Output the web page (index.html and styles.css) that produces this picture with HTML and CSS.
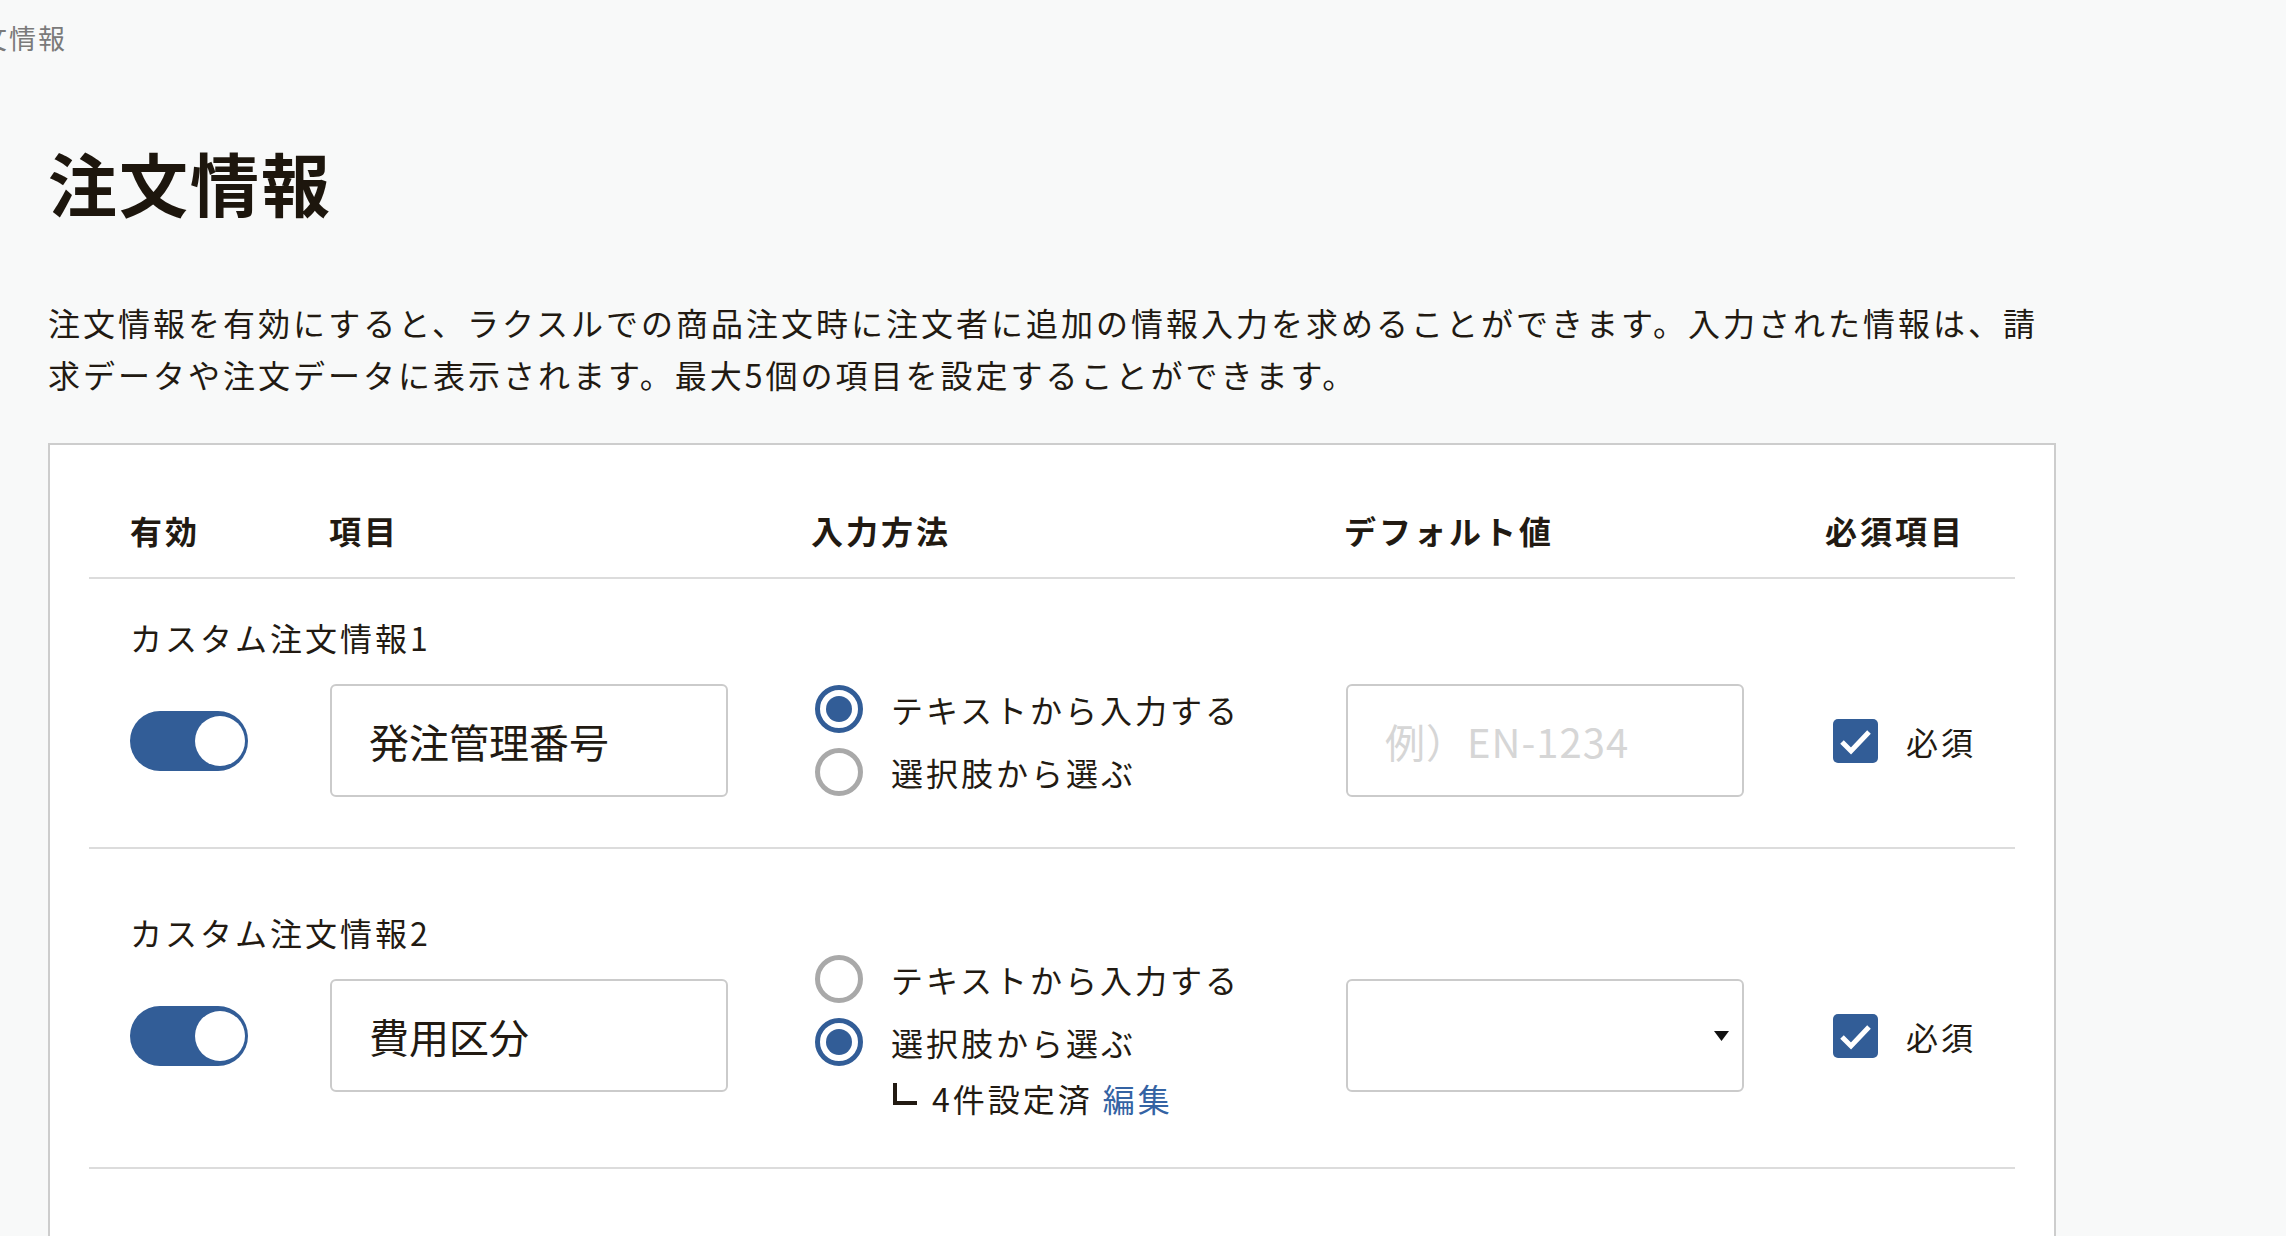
FILE: index.html
```html
<!DOCTYPE html>
<html lang="ja">
<head>
    <meta charset="UTF-8">
    <meta name="viewport" content="width=device-width, initial-scale=1.0">
    <title>注文情報</title>
    <link rel="stylesheet" href="styles.css">
</head>
<body>
    <div class="page">
        <div class="breadcrumb">注文情報</div>
        <h1>注文情報</h1>
        <p class="lead">注文情報を有効にすると、ラクスルでの商品注文時に注文者に追加の情報入力を求めることができます。入力された情報は、請求データや注文データに表示されます。最大5個の項目を設定することができます。</p>

        <div class="card">
            <div class="table-head">
                <div>有効</div>
                <div>項目</div>
                <div>入力方法</div>
                <div>デフォルト値</div>
                <div>必須項目</div>
            </div>

            <div class="field-row">
                <div class="item">
                    <div class="item-name">カスタム注文情報1</div>
                    <div class="item-controls">
                        <span class="toggle" title="有効"><span class="toggle-knob"></span></span>
                        <input class="text-input" type="text" value="発注管理番号">
                    </div>
                </div>
                <div class="methods">
                    <div class="radio is-checked"><span class="radio-mark"></span>テキストから入力する</div>
                    <div class="radio"><span class="radio-mark"></span>選択肢から選ぶ</div>
                </div>
                <div class="default">
                    <input class="text-input" type="text" placeholder="例）EN-1234">
                </div>
                <div class="required">
                    <span class="checkbox">
                        <svg width="45" height="44" viewBox="0 0 45 44"><polyline points="9,23 18,32 36,13" fill="none" stroke="#fff" stroke-width="5"/></svg>
                    </span>
                    必須
                </div>
            </div>

            <div class="field-row">
                <div class="item">
                    <div class="item-name">カスタム注文情報2</div>
                    <div class="item-controls">
                        <span class="toggle" title="有効"><span class="toggle-knob"></span></span>
                        <input class="text-input" type="text" value="費用区分">
                    </div>
                </div>
                <div class="methods">
                    <div class="radio"><span class="radio-mark"></span>テキストから入力する</div>
                    <div class="radio is-checked"><span class="radio-mark"></span>選択肢から選ぶ</div>
                    <div class="note"><span>4件設定済</span><a href="#" class="edit-link">編集</a></div>
                </div>
                <div class="default">
                    <div class="select">
                        <svg class="select-arrow" width="15" height="10" viewBox="0 0 15 10"><polygon points="0,0 15,0 7.5,10" fill="#111"/></svg>
                    </div>
                </div>
                <div class="required">
                    <span class="checkbox">
                        <svg width="45" height="44" viewBox="0 0 45 44"><polyline points="9,23 18,32 36,13" fill="none" stroke="#fff" stroke-width="5"/></svg>
                    </span>
                    必須
                </div>
            </div>
        </div>
    </div>
</body>
</html>
```

FILE: styles.css
```css
* {
    box-sizing: border-box;
}
body {
    margin: 0;
    background: #f8f9f9;
    color: #221a12;
    font-family: "Noto Sans CJK JP", "Noto Sans", sans-serif;
    font-size: 32px;
    letter-spacing: 3px;
    overflow: hidden;
}
.page {
    width: 2008px;
    margin-left: 48px;
    padding-top: 18px;
}
.breadcrumb {
    margin-left: -97px;
    font-size: 27px;
    line-height: 40px;
    letter-spacing: 2px;
    color: #7a7a7a;
}
h1 {
    margin: 84px 0 0 0;
    font-size: 69px;
    line-height: 80px;
    letter-spacing: 2px;
    font-weight: 700;
    color: #1d160d;
}
.lead {
    margin: 74px 0 0 0;
    line-height: 52px;
}
.card {
    margin-top: 43px;
    background: #fff;
    border: 2px solid #cdcdcd;
    padding: 61px 39px 120px 39px;
}
.table-head {
    display: grid;
    grid-template-columns: 199px 482px 533px 481px 1fr;
    padding: 0 0 23px 41px;
    border-bottom: 2px solid #dcdcdc;
    font-weight: 700;
    line-height: 48px;
}
.field-row {
    display: grid;
    grid-template-columns: 681px 533px 481px 1fr;
    align-items: center;
    padding: 104px 0 49px 41px;
    border-bottom: 2px solid #dcdcdc;
}
.item-name {
    line-height: 40px;
    margin-top: -67px;
    margin-bottom: 27px;
}
.item-controls {
    display: flex;
    align-items: center;
    gap: 82px;
}
.toggle {
    display: flex;
    align-items: center;
    justify-content: flex-end;
    width: 118px;
    height: 60px;
    padding-right: 3px;
    border-radius: 30px;
    background: #325d97;
}
.toggle-knob {
    width: 50px;
    height: 50px;
    border-radius: 50%;
    background: #fff;
}
.text-input {
    width: 398px;
    height: 113px;
    padding: 0 37px;
    border: 2px solid #cbcbcb;
    border-radius: 6px;
    background: #fff;
    font-family: inherit;
    font-size: 40px;
    letter-spacing: 0;
    color: #221a12;
    outline: none;
}
.text-input::placeholder {
    color: #d6d6d6;
    letter-spacing: 1px;
}
.methods {
    display: flex;
    flex-direction: column;
    gap: 11px;
    padding-left: 4px;
}
.radio {
    display: flex;
    align-items: center;
    gap: 28px;
    height: 52px;
}
.radio-mark {
    display: flex;
    align-items: center;
    justify-content: center;
    width: 48px;
    height: 48px;
    border-radius: 50%;
    border: 5px solid #a9a9a9;
    background: #fff;
}
.radio.is-checked .radio-mark {
    border-color: #325d97;
}
.radio.is-checked .radio-mark::after {
    content: "";
    width: 26px;
    height: 26px;
    border-radius: 50%;
    background: #325d97;
}
.note {
    display: flex;
    padding-left: 78px;
    line-height: 39px;
}
.note::before {
    content: "";
    width: 20px;
    height: 18px;
    margin: 4px 15px 0 0;
    border-left: 4px solid #221a12;
    border-bottom: 4px solid #221a12;
}
.edit-link {
    margin-left: 10px;
    color: #3463a3;
    text-decoration: none;
}
.default {
    padding-left: 2px;
}
.select {
    display: flex;
    align-items: center;
    justify-content: flex-end;
    width: 398px;
    height: 113px;
    padding-right: 13px;
    border: 2px solid #cbcbcb;
    border-radius: 6px;
    background: #fff;
}
.required {
    display: flex;
    align-items: center;
    gap: 28px;
    padding-left: 8px;
}
.checkbox {
    display: block;
    width: 45px;
    height: 44px;
    border-radius: 5px;
    background: #325d97;
}
.checkbox svg {
    display: block;
}
```
